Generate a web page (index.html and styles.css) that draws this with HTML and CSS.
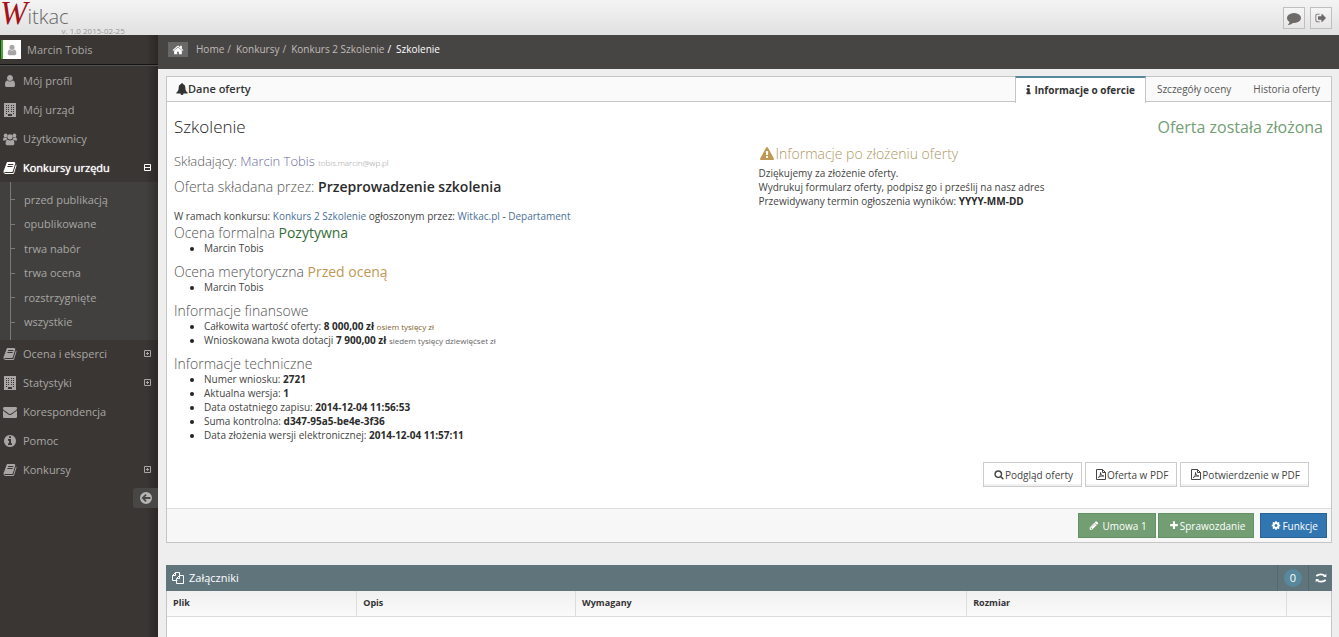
FILE: index.html
```html
<!DOCTYPE html>
<html lang="pl">
<head>
<meta charset="utf-8">
<title>Witkac - Szkolenie</title>
<link rel="stylesheet" href="styles.css">
</head>
<body>
<svg class="sprite" aria-hidden="true">
  <symbol id="user" viewBox="0 0 1792 1792"><path d="M1536 1399q0 109-62.500 187t-150.500 78h-854q-88 0-150.500-78t-62.500-187q0-85 8.500-160.500t31.500-152 58.500-131 94-89 134.500-34.500q131 128 313 128t313-128q76 0 134.500 34.500t94 89 58.500 131 31.500 152 8.500 160.500zm-256-887q0 159-112.500 271.500t-271.500 112.500-271.500-112.500-112.500-271.500 112.500-271.500 271.500-112.500 271.500 112.500 112.500 271.500z"/></symbol>
  <symbol id="building" viewBox="0 0 14 14"><path fill-rule="evenodd" d="M1 0h12v14H1zM3 2v1h1V2zm2 0v1h1V2zm3 0v1h1V2zm2 0v1h1V2zM3 4v1h1V4zm2 0v1h1V4zm3 0v1h1V4zm2 0v1h1V4zM3 6v1h1V6zm2 0v1h1V6zm3 0v1h1V6zm2 0v1h1V6zM3 8v1h1V8zm2 0v1h1V8zm3 0v1h1V8zm2 0v1h1V8zM3 10v1h1v-1zm7 0v1h1v-1zM5 11v2h4v-2z"/></symbol>
  <symbol id="users" viewBox="0 0 16 14"><circle cx="3" cy="3" r="2.200"/><circle cx="13" cy="3" r="2.200"/><circle cx="8" cy="4.500" r="3"/><path d="M0 8.500C0 6.500.7 5 1.500 5c1 .8 2 .8 2.900.5C4.500 6.500 4.900 7.200 5 7.500c-1 0-1.700.4-2.200 1.200H1C.4 8.700 0 8.800 0 8.500zM16 8.500C16 6.500 15.300 5 14.500 5c-1 .8-2 .8-2.900.5-.1 1-.5 1.700-.6 2 1 0 1.700.4 2.200 1.200H15c.6 0 1 .1 1-.2zM3 12c0-2.500.7-4.200 2.200-4.200C7 9 9 9 10.800 7.800c1.500 0 2.200 1.700 2.200 4.200 0 1.300-.8 2-2 2H5c-1.200 0-2-.7-2-2z"/></symbol>
  <symbol id="book" viewBox="0 0 1792 1792"><path d="M1703 478q40 57 18 129l-275 906q-19 64-76.500 107.500t-122.500 43.500h-923q-77 0-148.500-53.500t-99.500-131.500q-24-67-2-127 0-4 3-27t4-37q1-8-3-21.500t-3-19.500q2-11 8-21t16.500-23.500 16.500-23.500q23-38 45-91.500t30-91.500q3-10 .5-30t-.5-28q3-11 17-28t17-23q21-36 42-92t25-90q1-9-2.500-32t.5-28q4-13 22-30.500t22-22.500q19-26 42.500-84.500t27.500-96.500q1-8-3-25.500t-2-26.500q2-8 9-18t18-23 17-21q8-12 16.500-30.500t15-35 16-36 19.500-32 26.500-23.500 36-11.500 47.500 5.500l-1 3q38-9 51-9h761q74 0 114 56t18 130l-274 906q-36 119-71.500 153.500t-128.500 34.500h-869q-27 0-38 15-11 16-1 43 24 70 144 70h923q29 0 56-15.500t35-41.500l300-987q7-22 5-57 38 15 59 43zm-1064 2q-4 13 2 22.500t20 9.500h608q13 0 25.500-9.500t16.500-22.500l21-64q4-13-2-22.500t-20-9.500h-608q-13 0-25.500 9.500t-16.500 22.500zm-83 256q-4 13 2 22.500t20 9.500h608q13 0 25.500-9.500t16.500-22.500l21-64q4-13-2-22.500t-20-9.500h-608q-13 0-25.500 9.500t-16.500 22.500z"/></symbol>
  <symbol id="envelope" viewBox="0 0 1792 1792"><path d="M1792 710v794q0 66-47 113t-113 47h-1472q-66 0-113-47t-47-113v-794q44 49 101 87 362 246 497 345 57 42 92.500 65.500t94.500 48 110 24.500h2q51 0 110-24.500t94.500-48 92.500-65.500q170-123 498-345 57-39 100-87zm0-294q0 79-49 151t-122 123q-376 261-468 325-10 7-42.500 31t-54 38.500-52 32.500-57.500 27-50 9h-2q-23 0-50-9t-57.500-27-52-32.500-54-38.500-42.500-31q-91-64-262-182.500t-205-142.500q-62-42-117-115.500t-55-136.500q0-78 41.500-130t118.500-52h1472q65 0 112.500 47t47.500 113z"/></symbol>
  <symbol id="info-circle" viewBox="0 0 1792 1792"><path d="M1152 1376v-160q0-14-9-23t-23-9h-96v-512q0-14-9-23t-23-9h-320q-14 0-23 9t-9 23v160q0 14 9 23t23 9h96v320h-96q-14 0-23 9t-9 23v160q0 14 9 23t23 9h448q14 0 23-9t9-23zm-128-896v-160q0-14-9-23t-23-9h-192q-14 0-23 9t-9 23v160q0 14 9 23t23 9h192q14 0 23-9t9-23zm640 416q0 209-103 385.500t-279.500 279.500-385.500 103-385.500-103-279.500-279.500-103-385.500 103-385.500 279.500-279.500 385.500-103 385.500 103 279.500 279.500 103 385.500z"/></symbol>
  <symbol id="arrow-left" viewBox="0 0 14 14"><path fill-rule="evenodd" d="M7 1a6 6 0 1 0 0 12A6 6 0 0 0 7 1zM2.500 7l4-4 1.200 1.200L6 6h5.500v2H6l1.700 1.800L6.500 11z"/></symbol>
  <symbol id="minus-square" viewBox="0 0 9 9"><path fill="none" stroke="currentColor" d="M1.500 1.500h6v6h-6zM2 4.500h5"/></symbol>
  <symbol id="plus-square" viewBox="0 0 9 9"><path fill="none" stroke="currentColor" d="M1.500 1.500h6v6h-6zM3 4.500h3M4.500 3v3"/></symbol>
  <symbol id="home" viewBox="0 0 1792 1792"><path d="M1472 992v480q0 26-19 45t-45 19h-384v-384h-256v384h-384q-26 0-45-19t-19-45v-480q0-1 .5-3t.5-3l575-474 575 474q1 2 1 6zm223-69l-62 74q-8 9-21 11h-3q-13 0-21-7l-692-577-692 577q-12 8-24 7-13-2-21-11l-62-74q-8-10-7-23.500t11-21.500l719-599q32-26 76-26t76 26l244 204v-195q0-14 9-23t23-9h192q14 0 23 9t9 23v408l219 182q10 8 11 21.500t-7 23.500z"/></symbol>
  <symbol id="comment" viewBox="0 0 1792 1792"><path d="M1792 896q0 174-120 321.500t-326 233-450 85.500q-70 0-145-8-198 175-460 242-49 14-114 22-17 2-30.500-9t-17.500-29v-1q-3-4-.5-12t2-10 4.500-9.500l6-9 7-8.500 8-9q7-8 31-34.500t34.500-38 31-39.500 32.500-51 27-59 26-76q-157-89-247.500-220t-90.500-281q0-130 71-248.500t191-204.500 286-136.500 348-50.500q244 0 450 85.500t326 233 120 321.500z"/></symbol>
  <symbol id="sign-out" viewBox="0 0 1792 1792"><path d="M704 1440q0 4 1 20t.5 26.500-3 23.500-10 19.500-20.500 6.500h-320q-119 0-203.500-84.500t-84.500-203.500v-704q0-119 84.500-203.500t203.500-84.500h320q13 0 22.500 9.500t9.500 22.500q0 4 1 20t.5 26.500-3 23.500-10 19.500-20.500 6.500h-320q-66 0-113 47t-47 113v704q0 66 47 113t113 47h312l11.500 1 11.500 3 8 5.500 7 9 2 13.500zm928-544q0 26-19 45l-544 544q-19 19-45 19t-45-19-19-45v-288h-448q-26 0-45-19t-19-45v-384q0-26 19-45t45-19h448v-288q0-26 19-45t45-19 45 19l544 544q19 19 19 45z"/></symbol>
  <symbol id="bell" viewBox="0 0 12 12"><path d="M6 0c.6 0 .8.400.8.900C8.500 1.300 9.300 2.700 9.300 4.500c0 2.500.8 4 2.400 5.200v.8H7.500a1.500 1.500 0 0 1-3 0H.3v-.8C1.900 8.500 2.700 7 2.700 4.500c0-1.800.8-3.200 2.500-3.600C5.200.4 5.400 0 6 0z"/></symbol>
  <symbol id="info" viewBox="512 0 768 1792"><path d="M1216 1344v128q0 26-19 45t-45 19h-512q-26 0-45-19t-19-45v-128q0-26 19-45t45-19h64v-384h-64q-26 0-45-19t-19-45v-128q0-26 19-45t45-19h384q26 0 45 19t19 45v576h64q26 0 45 19t19 45zm-128-1152v192q0 26-19 45t-45 19h-256q-26 0-45-19t-19-45v-192q0-26 19-45t45-19h256q26 0 45 19t19 45z"/></symbol>
  <symbol id="warning" viewBox="0 0 1792 1792"><path d="M1024 1375v-190q0-14-9.500-23.500t-22.500-9.500h-192q-13 0-22.500 9.500t-9.500 23.500v190q0 14 9.500 23.500t22.500 9.500h192q13 0 22.500-9.500t9.500-23.500zm-2-374l18-459q0-12-10-19-13-11-24-11h-220q-11 0-24 11-10 7-10 21l17 457q0 10 10 16.500t24 6.500h185q14 0 23.500-6.500t10.500-16.500zm-14-934l768 1408q35 63-2 126-17 29-46.500 46t-63.500 17h-1536q-34 0-63.500-17t-46.500-46q-37-63-2-126l768-1408q17-31 47-49t65-18 65 18 47 49z"/></symbol>
  <symbol id="search" viewBox="0 0 1792 1792"><path d="M1216 832q0-185-131.500-316.500t-316.500-131.500-316.500 131.500-131.500 316.500 131.500 316.500 316.500 131.500 316.500-131.500 131.500-316.500zm512 832q0 52-38 90t-90 38q-54 0-90-38l-343-342q-179 124-399 124-143 0-273.500-55.500t-225-150-150-225-55.500-273.500 55.500-273.500 150-225 225-150 273.500-55.500 273.500 55.500 225 150 150 225 55.500 273.500q0 220-124 399l343 343q37 37 37 90z"/></symbol>
  <symbol id="pdf" viewBox="0 0 10 11"><path fill="none" stroke="currentColor" d="M.5.500h6l3 3v7h-9zM6.500.500v3h3M2.300 8.500C4 7.500 4.700 5.500 4.500 3.500 4.800 6 6 7 7.800 7 5.500 6.800 3.700 7.300 2.300 8.500z"/></symbol>
  <symbol id="pencil" viewBox="0 0 1792 1792"><path d="M491 1536l91-91-235-235-91 91v107h128v128h107zm523-928q0-22-22-22-10 0-17 7l-542 542q-7 7-7 17 0 22 22 22 10 0 17-7l542-542q7-7 7-17zm-54-192l416 416-832 832h-416v-416zm683 96q0 53-37 90l-166 166-416-416 166-165q36-38 90-38 53 0 91 38l235 234q37 39 37 91z"/></symbol>
  <symbol id="plus" viewBox="0 0 1792 1792"><path d="M1600 736v192q0 40-28 68t-68 28h-416v416q0 40-28 68t-68 28h-192q-40 0-68-28t-28-68v-416h-416q-40 0-68-28t-28-68v-192q0-40 28-68t68-28h416v-416q0-40 28-68t68-28h192q40 0 68 28t28 68v416h416q40 0 68 28t28 68z"/></symbol>
  <symbol id="cog" viewBox="0 0 1792 1792"><path d="M1152 896q0-106-75-181t-181-75-181 75-75 181 75 181 181 75 181-75 75-181zm512-109v222q0 12-8 23t-20 13l-185 28q-19 54-39 91 35 50 107 138 10 12 10 25t-9 23q-27 37-99 108t-94 71q-12 0-26-9l-138-108q-44 23-91 38-16 136-29 186-7 28-36 28h-222q-14 0-24.500-8.500t-11.500-21.500l-28-184q-49-16-90-37l-141 107q-10 9-25 9-14 0-25-11-126-114-165-168-7-10-7-23 0-12 8-23 15-21 51-66.500t54-70.500q-27-50-41-99l-183-27q-13-2-21-12.500t-8-23.500v-222q0-12 8-23t19-13l186-28q14-46 39-92-40-57-107-138-10-12-10-24 0-10 9-23 26-36 98.500-107.500t94.500-71.500q13 0 26 10l138 107q44-23 91-38 16-136 29-186 7-28 36-28h222q14 0 24.500 8.500t11.500 21.500l28 184q49 16 90 37l142-107q9-9 24-9 13 0 25 10 129 119 165 170 7 8 7 22 0 12-8 23-15 21-51 66.500t-54 70.500q26 50 41 98l183 28q13 2 21 12.500t8 23.500z"/></symbol>
  <symbol id="copy" viewBox="0 0 12 12"><path fill="none" stroke="currentColor" d="M5.500 8.500h-5v-5l3-3h4V3M3.500.500v3h-3M4.500 6.500l3-3h4v8h-7v-5h3v-3"/></symbol>
  <symbol id="refresh" viewBox="0 0 12 12"><path fill="none" stroke="currentColor" stroke-width="1.700" d="M1.300 4C3.500 2 7.500 1.800 9.700 3.700M10.700 8C8.500 10 4.500 10.200 2.300 8.300"/><path d="M11.300 1.800v3.200H8zM.7 10.200V7H4z"/></symbol>
</svg>

<header class="topbar">
  <a class="logo" href="#"><span class="logo-mark">W</span><span class="logo-name">itkac</span></a>
  <span class="version">v. 1.0 2015-02-25</span>
  <div class="top-actions">
    <button class="icon-button" type="button" aria-label="Wiadomości"><svg class="icon-large"><use href="#comment"/></svg></button>
    <button class="icon-button" type="button" aria-label="Wyloguj"><svg class="icon"><use href="#sign-out"/></svg></button>
  </div>
</header>

<div class="shell">
  <aside class="sidebar">
    <a class="account" href="#"><span class="avatar"><svg class="icon"><use href="#user"/></svg></span>Marcin Tobis</a>
    <nav>
      <ul class="menu">
        <li><a href="#"><svg class="icon-large"><use href="#user"/></svg>Mój profil</a></li>
        <li><a href="#"><svg class="icon-large"><use href="#building"/></svg>Mój urząd</a></li>
        <li><a href="#"><svg class="icon-large"><use href="#users"/></svg>Użytkownicy</a></li>
        <li><a class="active" href="#"><svg class="icon-large"><use href="#book"/></svg>Konkursy urzędu<svg class="toggle"><use href="#minus-square"/></svg></a>
          <ul class="submenu">
            <li><a href="#">przed publikacją</a></li>
            <li><a href="#">opublikowane</a></li>
            <li><a href="#">trwa nabór</a></li>
            <li><a href="#">trwa ocena</a></li>
            <li><a href="#">rozstrzygnięte</a></li>
            <li><a href="#">wszystkie</a></li>
          </ul>
        </li>
        <li><a href="#"><svg class="icon-large"><use href="#book"/></svg>Ocena i eksperci<svg class="toggle"><use href="#plus-square"/></svg></a></li>
        <li><a href="#"><svg class="icon-large"><use href="#building"/></svg>Statystyki<svg class="toggle"><use href="#plus-square"/></svg></a></li>
        <li><a href="#"><svg class="icon-large"><use href="#envelope"/></svg>Korespondencja</a></li>
        <li><a href="#"><svg class="icon-large"><use href="#info-circle"/></svg>Pomoc</a></li>
        <li><a href="#"><svg class="icon-large"><use href="#book"/></svg>Konkursy<svg class="toggle"><use href="#plus-square"/></svg></a></li>
      </ul>
    </nav>
    <button class="collapse" type="button" aria-label="Zwiń menu"><svg class="icon-large"><use href="#arrow-left"/></svg></button>
  </aside>

  <main class="main">
    <nav class="ribbon">
      <button class="home" type="button" aria-label="Strona główna"><svg class="icon"><use href="#home"/></svg></button>
      <ol class="crumbs">
        <li><a href="#">Home</a></li>
        <li><a href="#">Konkursy</a></li>
        <li><a href="#">Konkurs 2 Szkolenie</a></li>
        <li class="current">Szkolenie</li>
      </ol>
    </nav>

    <div class="content">
      <section class="offer">
        <header class="offer-head">
          <h2><svg class="icon"><use href="#bell"/></svg>Dane oferty</h2>
          <div class="tabs" role="tablist">
            <button class="tab selected" type="button" role="tab" aria-selected="true"><svg class="icon-narrow"><use href="#info"/></svg>Informacje o ofercie</button>
            <button class="tab" type="button" role="tab">Szczegóły oceny</button>
            <button class="tab" type="button" role="tab">Historia oferty</button>
          </div>
        </header>
        <div class="offer-body">
          <div class="title-row">
            <h1>Szkolenie</h1>
            <p class="status">Oferta została złożona</p>
          </div>
          <div class="columns">
            <div class="details">
              <p class="lead applicant">Składający: <a href="#">Marcin Tobis</a> <a class="mail" href="#">tobis.marcin@wp.pl</a></p>
              <p class="lead">Oferta składana przez: <strong>Przeprowadzenie szkolenia</strong></p>
              <p class="within">W ramach konkursu: <a href="#">Konkurs 2 Szkolenie</a> ogłoszonym przez: <a href="#">Witkac.pl</a> - <a href="#">Departament</a></p>
              <h3>Ocena formalna <span class="good">Pozytywna</span></h3>
              <ul><li>Marcin Tobis</li></ul>
              <h3>Ocena merytoryczna <span class="pending">Przed oceną</span></h3>
              <ul><li>Marcin Tobis</li></ul>
              <h3>Informacje finansowe</h3>
              <ul>
                <li>Całkowita wartość oferty: <strong>8 000,00 zł</strong> <small class="brown">osiem tysięcy zł</small></li>
                <li>Wnioskowana kwota dotacji <strong>7 900,00 zł</strong> <small>siedem tysięcy dziewięćset zł</small></li>
              </ul>
              <h3>Informacje techniczne</h3>
              <ul>
                <li>Numer wniosku: <strong>2721</strong></li>
                <li>Aktualna wersja: <strong>1</strong></li>
                <li>Data ostatniego zapisu: <strong>2014-12-04 11:56:53</strong></li>
                <li>Suma kontrolna: <strong>d347-95a5-be4e-3f36</strong></li>
                <li>Data złożenia wersji elektronicznej: <strong>2014-12-04 11:57:11</strong></li>
              </ul>
            </div>
            <div class="notice">
              <h3><svg class="icon-large"><use href="#warning"/></svg>Informacje po złożeniu oferty</h3>
              <p>Dziękujemy za złożenie oferty.</p>
              <p>Wydrukuj formularz oferty, podpisz go i prześlij na nasz adres</p>
              <p>Przewidywany termin ogłoszenia wyników: <strong>YYYY-MM-DD</strong></p>
            </div>
          </div>
          <div class="documents">
            <button class="btn" type="button"><svg class="icon-small"><use href="#search"/></svg>Podgląd oferty</button>
            <button class="btn" type="button"><svg class="icon-small"><use href="#pdf"/></svg>Oferta w PDF</button>
            <button class="btn" type="button"><svg class="icon-small"><use href="#pdf"/></svg>Potwierdzenie w PDF</button>
          </div>
        </div>
        <footer class="offer-foot">
          <button class="btn green spaced" type="button"><svg class="icon-small"><use href="#pencil"/></svg>Umowa 1</button>
          <button class="btn green" type="button"><svg class="icon-small"><use href="#plus"/></svg>Sprawozdanie</button>
          <button class="btn blue" type="button"><svg class="icon-small"><use href="#cog"/></svg>Funkcje</button>
        </footer>
      </section>

      <section class="attachments">
        <header class="attachments-head">
          <h2><svg class="icon"><use href="#copy"/></svg>Załączniki</h2>
          <span class="count-cell"><span class="count">0</span></span>
          <button class="reload" type="button" aria-label="Odśwież"><svg class="icon"><use href="#refresh"/></svg></button>
        </header>
        <table>
          <colgroup><col class="col-file"><col class="col-desc"><col class="col-required"><col class="col-size"><col class="col-tools"></colgroup>
          <thead><tr><th>Plik</th><th>Opis</th><th>Wymagany</th><th>Rozmiar</th><th></th></tr></thead>
        </table>
      </section>
    </div>
  </main>
</div>
</body>
</html>
```
FILE: styles.css
```css
* { box-sizing: border-box; }

body {
  margin: 0;
  min-height: 100vh;
  display: flex;
  flex-direction: column;
  overflow: hidden;
  font: 10px/14px "Open Sans", "Liberation Sans", sans-serif;
  color: #444;
  background: #eeeeee;
}

h1, h2, h3, p, ul, ol { margin: 0; padding: 0; font-weight: 400; }
a { color: #4b7199; text-decoration: none; }
button { font: inherit; color: inherit; margin: 0; padding: 0; border: 0; background: none; cursor: pointer; }
svg { display: block; flex: none; fill: currentColor; }
strong { font-weight: 700; color: #2b2b2b; }

.sprite { position: absolute; width: 0; height: 0; }
.icon { width: 12px; height: 12px; }
.icon-large { width: 14px; height: 14px; }
.icon-small { width: 10px; height: 11px; }
.icon-narrow { width: 5px; height: 12px; }

/* Top bar */
.topbar {
  display: flex;
  height: 35px;
  padding: 0 7px 0 0;
  background: linear-gradient(#f4f4f4, #e1e1e1);
}
.logo { display: flex; align-items: baseline; color: #666; }
.logo-mark { font: italic 400 33px/26px "Liberation Serif", serif; color: #a31217; }
.logo-name { font-size: 20px; line-height: 24px; font-weight: 300; }
.version { align-self: flex-end; margin-left: -7px; font-size: 8px; line-height: 8px; color: #999; }
.top-actions { display: flex; align-items: center; gap: 5px; margin-left: auto; }
.icon-button {
  display: grid;
  place-items: center;
  width: 22px;
  height: 22px;
  border: 1px solid #bfbfbf;
  background: linear-gradient(#f5f5f5, #e6e6e6);
  color: #6d6a69;
}

.shell { display: flex; flex: 1; }

/* Sidebar */
.sidebar {
  display: flex;
  flex-direction: column;
  flex: 0 0 158px;
  font-size: 11px;
  background: linear-gradient(to left, #2b2825, #3a3633 12px);
}
.sidebar ul { list-style: none; }
.sidebar a { color: #a8a6a4; }
.account {
  display: flex;
  align-items: center;
  gap: 6px;
  height: 30px;
  padding: 0 1px;
  border-bottom: 1px solid #151413;
}
.avatar {
  display: grid;
  place-items: center;
  width: 20px;
  height: 19px;
  border-left: 2px solid #40ac2b;
  background: #fff;
}
.menu { border-top: 1px solid #525151; }
.menu > li > a { display: flex; align-items: center; gap: 6px; height: 29px; padding: 0 6px 0 3px; }
.menu > li > a.active { color: #fff; text-shadow: 0 0 1px #fff; }
.toggle { width: 9px; height: 9px; margin-left: auto; }
.submenu { margin-bottom: -1px; padding: 5px 0 6px; background: linear-gradient(to left, #31302e, #41403e 12px); position: relative; }
.submenu::before { content: ""; position: absolute; top: 0; bottom: 0; left: 10px; border-left: 1px solid #7a7a7a; }
.submenu a { display: flex; align-items: center; gap: 9px; height: 25px; padding-left: 10px; }
.submenu li:nth-child(2n) a { height: 24px; }
.submenu a::before { content: ""; width: 5px; border-top: 1px solid #7a7a7a; }
.collapse {
  display: grid;
  place-items: center;
  align-self: flex-end;
  width: 25px;
  height: 20px;
  margin-top: 4px;
  border-radius: 3px 0 0 3px;
  background: #484746;
  color: #b5b5b5;
}

/* Breadcrumbs */
.main { flex: 1; min-width: 0; display: flex; flex-direction: column; }
.ribbon { display: flex; align-items: flex-start; gap: 8px; height: 34px; padding: 7px 10px; background: #474544; color: #c0bbb7; }
.home { display: grid; place-items: center; width: 20px; height: 15px; background: #686868; color: #fff; }
.crumbs { display: flex; list-style: none; line-height: 15px; }
.crumbs a { color: #c0bbb7; }
.crumbs li + li::before { content: "/"; margin: 0 5px 0 3px; }
.crumbs .current { color: #fff; }

/* Offer panel */
.content { flex: 1; display: flex; flex-direction: column; padding: 7px 7px 0 8px; }
.offer { border: 1px solid #c5c5c5; background: #fff; }
.offer-head { display: flex; height: 25px; border-bottom: 1px solid #c5c5c5; background: #fafafa; }
.offer-head h2 { display: flex; align-items: center; margin-right: auto; padding-left: 9px; font-size: 11px; font-weight: 600; color: #333; }
.tabs { display: flex; margin-top: -1px; }
.tab { height: 25px; padding: 0 11px; color: #555; }
.tab.selected {
  display: flex;
  align-items: center;
  gap: 3px;
  height: 27px;
  padding: 0 10px 2px;
  border: solid #c5c5c5;
  border-width: 0 1px;
  border-top: 2px solid #57889c;
  background: #fff;
  color: #333;
  font-weight: 700;
}
.offer-body { padding: 12px 8px 21px 7px; }
.title-row { display: flex; justify-content: space-between; line-height: 26px; }
.title-row h1 { font-size: 17px; font-weight: 300; color: #222; }
.status { font-size: 16px; color: #739e73; }
.columns { display: grid; grid-template-columns: 1fr 1fr; gap: 20px; padding-top: 5px; }
.lead { margin-top: 4px; font-size: 14px; line-height: 22px; font-weight: 300; color: #555; }
.lead strong { font-weight: 600; }
.lead.applicant { margin-top: 5px; font-size: 13px; }
.applicant a { color: #6a6aa0; }
.applicant .mail { font-size: 8px; line-height: 8px; color: #999; }
.within { margin: 11px 0 1px; }
h3 { font-size: 14px; line-height: 17px; font-weight: 300; color: #555; }
.details ul { padding: 0 0 8px 30px; }
.details li::marker { color: #222; }
.good { font-weight: 400; color: #356e35; }
.pending { font-weight: 400; color: #c09853; }
small { font-size: 8px; line-height: 8px; color: #666; }
.brown { color: #826430; }
.notice h3 { display: flex; align-items: center; gap: 2px; padding-left: 1px; margin-bottom: 4px; color: #b09865; }
.notice h3 svg { color: #c09853; }
.documents { display: flex; justify-content: flex-end; gap: 3px; padding: 12px 14px 0 0; }

.btn {
  display: flex;
  align-items: center;
  gap: 1px;
  height: 25px;
  padding: 0 8px 0 10px;
  border: 1px solid #ccc;
  background: #fff;
  box-shadow: inset 0 -2px #f0f0f0;
  color: #444;
}
.btn.green { border-color: #659265; background: #739e73; box-shadow: none; color: #fff; }
.btn.blue { margin-left: 4px; border-color: #2a6395; background: #3276b1; box-shadow: none; color: #fff; }
.btn.spaced { gap: 4px; }
.offer-foot { display: flex; justify-content: flex-end; gap: 2px; padding: 4px 4px 4px; border-top: 1px solid #ddd; background: #f7f7f7; }

/* Attachments */
.attachments { flex: 1; margin-top: 22px; border: 1px solid #c5c5c5; border-width: 0 1px; background: #fff; }
.attachments-head { display: flex; align-items: stretch; height: 26px; margin: 0 -1px; background: #60747c; color: #fff; }
.attachments-head h2 { display: flex; align-items: center; gap: 5px; margin-right: auto; padding-left: 6px; font-size: 11px; }
.count-cell, .reload { display: grid; place-items: center; border-left: 1px solid #56686f; color: #fff; }
.count-cell { width: 31px; }
.reload { width: 24px; }
.count { width: 18px; height: 18px; border-radius: 50%; background: #57889c; font-size: 11px; line-height: 18px; text-align: center; }
table { width: 100%; table-layout: fixed; border-collapse: collapse; }
th {
  height: 25px;
  padding: 0 6px;
  border: solid #ddd;
  border-width: 0 1px 1px 0;
  background: linear-gradient(#f0f0f0, #fafafa);
  font-size: 9px;
  font-weight: 700;
  text-align: left;
  color: #333;
}
th:last-child { border-right: 0; }
.col-file { width: 16.3%; }
.col-desc { width: 18.8%; }
.col-required { width: 33.600%; }
.col-size { width: 27.500%; }
```
